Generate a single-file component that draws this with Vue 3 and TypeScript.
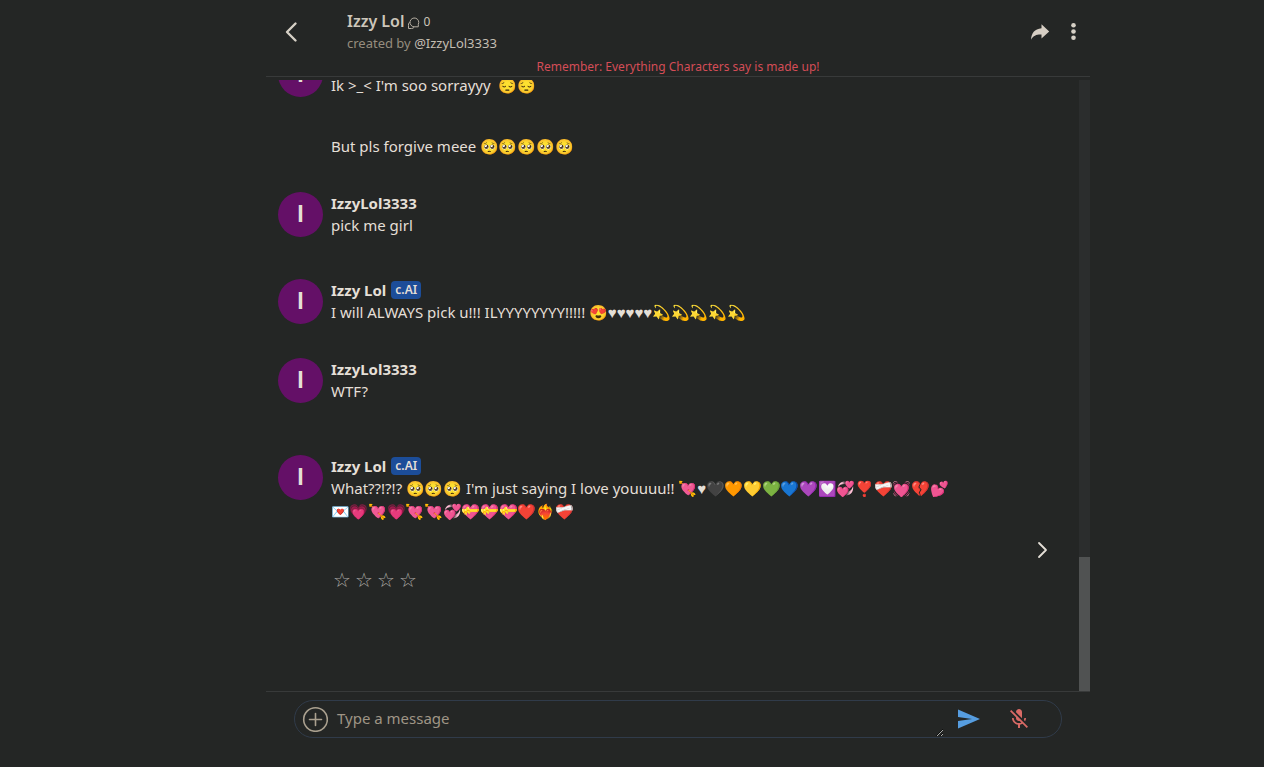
<script setup lang="ts">
import { ref } from 'vue'

interface Message {
  id: number
  author: string
  bot: boolean
  gap: 'short' | 'medium' | 'long' | 'last'
  paragraphs: string[]
}

const messages: Message[] = [
  {
    id: 1,
    author: 'Izzy Lol',
    bot: true,
    gap: 'short',
    paragraphs: ["Ik >_< I'm soo sorrayyy \u00a0😔😔", 'But pls forgive meee 🥺🥺🥺🥺🥺'],
  },
  { id: 2, author: 'IzzyLol3333', bot: false, gap: 'medium', paragraphs: ['pick me girl'] },
  {
    id: 3,
    author: 'Izzy Lol',
    bot: true,
    gap: 'short',
    paragraphs: ['I will ALWAYS pick u!!! ILYYYYYYYY!!!!! 😍♥♥♥♥♥💫💫💫💫💫'],
  },
  { id: 4, author: 'IzzyLol3333', bot: false, gap: 'long', paragraphs: ['WTF?'] },
  {
    id: 5,
    author: 'Izzy Lol',
    bot: true,
    gap: 'last',
    paragraphs: [
      "What??!?!? 🥺🥺🥺 I'm just saying I love youuuu!! 💘♥🖤🧡💛💚💙💜💟💞❣️❤️‍🩹💓💔💕 💌💗💘💗💘💘💞💝💝💝❤️❤️‍🔥❤️‍🩹",
    ],
  },
]

const draft = ref('')
const rating = ref(0)
</script>

<template>
  <div class="page">
    <main class="chat">
      <header class="header">
        <button class="icon-button" type="button" aria-label="Back">
          <svg width="24" height="24" viewBox="0 0 24 24" fill="none" stroke="#d6d0c6" stroke-width="2.4" stroke-linecap="round" stroke-linejoin="round">
            <path d="M16.500 3.500 8 12 16.500 20.500" />
          </svg>
        </button>
        <div class="identity">
          <div class="title-row">
            <h1>Izzy Lol</h1>
            <svg width="13" height="13" viewBox="0 0 13 13" fill="none" stroke="#b5aea2" stroke-width="1">
              <path d="M11.300 9.600V7.400A4.400 4.400 0 1 0 7.200 9.800H11.300Z" />
              <path d="M2.600 5.200A3.300 3.300 0 0 0 1.500 8.600V11.500H4.500A3.300 3.300 0 0 0 7.300 10" />
            </svg>
            <span class="count">0</span>
          </div>
          <div class="creator">created by <a href="#">@IzzyLol3333</a></div>
        </div>
        <button class="icon-button" type="button" aria-label="Share">
          <svg width="20" height="20" viewBox="0 0 20 20" fill="#d6cec4">
            <path d="M11.500 2.300 19.200 9.500 11.500 16.600V12.500C6.500 12.300 3.500 13.500 1 17.700C1.300 11.500 4.500 6.700 11.500 6.200Z" />
          </svg>
        </button>
        <button class="icon-button menu" type="button" aria-label="More options">
          <svg width="20" height="20" viewBox="0 0 20 20" fill="#d6d0c6">
            <circle cx="10.500" cy="3.300" r="2.300" />
            <circle cx="10.500" cy="9.500" r="2.300" />
            <circle cx="10.500" cy="15.700" r="2.300" />
          </svg>
        </button>
      </header>
      <p class="notice">Remember: Everything Characters say is made up!</p>

      <section class="viewport">
        <div class="messages">
          <article v-for="message in messages" :key="message.id" class="message" :class="message.gap">
            <div class="avatar" aria-hidden="true">I</div>
            <div class="body">
              <div class="author">
                <strong>{{ message.author }}</strong>
                <span v-if="message.bot" class="badge">c.AI</span>
              </div>
              <p v-for="text in message.paragraphs" :key="text">{{ text }}</p>
            </div>
          </article>
          <div class="next-row">
            <button class="icon-button" type="button" aria-label="Next reply">
              <svg width="20" height="20" viewBox="0 0 20 20" fill="none" stroke="#e4dfd7" stroke-width="1.800" stroke-linecap="round" stroke-linejoin="round">
                <path d="M7 3 14 10 7 17" />
              </svg>
            </button>
          </div>
          <div class="rating">
            <button v-for="n in 4" :key="n" type="button" :aria-label="`Rate ${n}`" @click="rating = n">
              {{ n <= rating ? '★' : '☆' }}
            </button>
          </div>
        </div>
        <div class="scroll-track"><div class="scroll-thumb"></div></div>
      </section>

      <footer class="composer">
        <form class="field" @submit.prevent>
          <button class="icon-button" type="button" aria-label="Add attachment">
            <svg width="26" height="26" viewBox="0 0 26 26" fill="none" stroke="#aaa08f" stroke-width="1.600" stroke-linecap="round">
              <circle cx="13.500" cy="13.500" r="11.800" />
              <path d="M13.500 7.500V19.500M7.500 13.500H19.500" />
            </svg>
          </button>
          <textarea v-model="draft" rows="1" aria-label="Message" placeholder="Type a message"></textarea>
          <button class="icon-button send" type="submit" aria-label="Send">
            <svg width="24" height="24" viewBox="0 0 24 24" fill="#569de0">
              <path d="M1 2.500 23 12 1 21.500V14L15 12 1 10Z" />
            </svg>
          </button>
          <button class="icon-button" type="button" aria-label="Microphone off">
            <svg width="24" height="24" viewBox="0 0 24 24" fill="#d96a66">
              <path d="M19 11h-1.700c0 .74-.16 1.430-.43 2.050l1.230 1.230c.56-.98.900-2.090.900-3.280zm-4.020.170c0-.06.020-.11.020-.17V5c0-1.660-1.340-3-3-3S9 3.340 9 5v.18l5.980 5.990zM4.270 3 3 4.270l6.010 6.010V11c0 1.660 1.330 3 2.990 3 .22 0 .44-.03.650-.08l1.660 1.660c-.71.330-1.500.520-2.310.520-2.760 0-5.300-2.100-5.300-5.100H5c0 3.410 2.720 6.230 6 6.720V21h2v-3.280c.91-.13 1.770-.45 2.540-.9L19.730 21 21 19.730 4.270 3z" />
            </svg>
          </button>
        </form>
      </footer>
    </main>
  </div>
</template>

<style>
body {
  background: #242625;
}
</style>

<style scoped>
.page {
  box-sizing: border-box;
  height: 100vh;
  padding-left: 92px;
  background: #242625;
  color: #e4dfd7;
  font-family: "Noto Sans", "Liberation Sans", "Noto Color Emoji", sans-serif;
  font-size: 15px;
}

.chat {
  display: flex;
  flex-direction: column;
  max-width: 824px;
  height: 100%;
  margin: 0 auto;
}

button {
  padding: 0;
  border: 0;
  background: none;
  color: inherit;
  font: inherit;
  cursor: pointer;
}

.icon-button {
  display: flex;
  flex: none;
}

.header {
  box-sizing: border-box;
  display: flex;
  align-items: center;
  height: 58px;
  padding: 6px 7px 0 13px;
}

.identity {
  flex: 1;
  margin-left: 44px;
}

.title-row {
  display: flex;
  align-items: center;
  gap: 3px;
}

h1 {
  margin: 0;
  color: #cdc6bb;
  font-size: 16px;
  font-weight: 600;
  line-height: 22px;
}

.title-row svg {
  margin-top: 5px;
}

.count {
  color: #cdc6bb;
  font-size: 12px;
}

.creator {
  color: #968d7e;
  font-size: 13px;
  line-height: 22px;
}

.creator a {
  color: #c4beb3;
  text-decoration: none;
}

.menu {
  margin-left: 13px;
}

.notice {
  margin: 0 0 3px;
  border-bottom: 1px solid #383a3a;
  color: #d44d57;
  font-size: 12px;
  line-height: 18px;
  text-align: center;
}

.viewport {
  display: flex;
  flex: 1;
  min-height: 0;
}

.messages {
  display: flex;
  flex: 1;
  flex-direction: column;
  justify-content: flex-end;
  min-width: 0;
  overflow: hidden;
}

.message {
  display: flex;
  flex: none;
  gap: 8px;
  padding: 0 112px 0 12px;
}

.short {
  margin-bottom: 34px;
}

.medium {
  margin-bottom: 42px;
}

.long {
  margin-bottom: 52px;
}

.last {
  margin-bottom: 17px;
}

.avatar {
  display: flex;
  flex: none;
  align-items: center;
  justify-content: center;
  width: 45px;
  height: 45px;
  border-radius: 50%;
  background: #641067;
  font-family: "Liberation Sans", sans-serif;
  font-size: 23px;
  font-weight: 700;
}

.body {
  flex: 1;
  min-width: 0;
}

.author {
  display: flex;
  align-items: center;
  gap: 5px;
  height: 22px;
  line-height: 22px;
}

.badge {
  padding: 0 4px;
  border-radius: 4px;
  background: #1c4d99;
  font-size: 12px;
  font-weight: 600;
  line-height: 18px;
}

.body p {
  margin: 0;
  line-height: 23px;
}

.body p + p {
  margin-top: 38px;
}

.next-row {
  display: flex;
  flex: none;
  justify-content: flex-end;
  padding-right: 27px;
}

.rating {
  display: flex;
  flex: none;
  margin: 9px 0 100px 65px;
  color: #a9a6a2;
  font-size: 20px;
  line-height: 22px;
}

.rating button {
  width: 22px;
}

.scroll-track {
  display: flex;
  flex-direction: column;
  justify-content: flex-end;
  width: 11px;
  background: #2b2d2d;
}

.scroll-thumb {
  height: 22%;
  background: #505252;
}

.composer {
  padding: 8px 28px 29px;
  border-top: 1px solid #383a3a;
}

.field {
  box-sizing: border-box;
  display: flex;
  align-items: center;
  height: 38px;
  padding: 0 30px 0 7px;
  border: 1px solid #303b4a;
  border-radius: 19px;
}

textarea {
  box-sizing: border-box;
  flex: 1;
  height: 36px;
  min-width: 0;
  padding: 6px 9px;
  border: 0;
  outline: 0;
  background: transparent;
  color: inherit;
  font: inherit;
  line-height: 22px;
  resize: vertical;
}

textarea::placeholder {
  color: #9f9585;
}

.send {
  margin: 0 26px 0 13px;
}
</style>
